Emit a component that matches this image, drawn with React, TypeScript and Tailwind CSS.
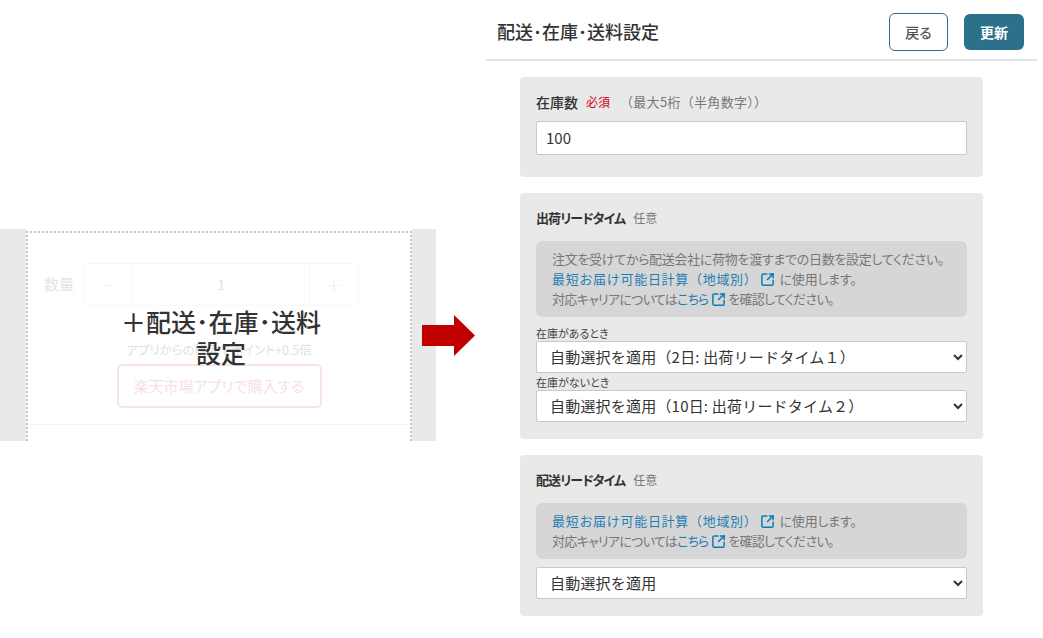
import { SquareArrowOutUpRight } from "lucide-react";

const Ext = ({ l, r }: { l: number; r: number }) => (
  <SquareArrowOutUpRight size={15} strokeWidth={2.4} style={{ marginLeft: l, marginRight: r }} className="inline-block -mt-[2px] text-[#0a7db8]" />
);

const selectCls =
  "block w-full h-[32px] bg-white border border-[#c9c9c9] rounded-[2px] pl-[9px] pb-[2px] text-[15px] text-[#333] tracking-[0.2px] [font-feature-settings:normal]";

const Short = () => (
  <div>
    <span className="[font-feature-settings:normal] text-[#1f7fb3] tracking-[0.7px]">最短お届け可能日計算（地域別）</span>
    <Ext l={2} r={5} />
    <span className="tracking-[-0.2px]">に使用します。</span>
  </div>
);
const Carrier = () => (
  <div className="tracking-[-0.7px]">
    対応キャリアについては<span className="text-[#1f7fb3] tracking-[-1px]">こちら</span>
    <Ext l={3} r={2} />を確認してください。
  </div>
);

export default function App() {
  return (
    <div className="flex w-[1043px] h-[638px] overflow-hidden bg-white text-[#333] font-['Noto_Sans_CJK_JP','Noto_Sans',sans-serif] [font-feature-settings:'palt']">
      <div className="w-[486px] shrink-0 pt-[229px]">
        <div className="flex items-center">
          <div className="relative w-[436px] h-[212px] shrink-0 bg-[#e9e9e9] pl-[26px] pr-[24px]">
            <div className="h-full bg-white pt-[2px]">
              <div className="h-full border-x-2 border-t-2 border-dotted border-[#c4c4c4]">
                <div className="opacity-20">
                  <div className="flex items-center pt-[30px] pl-[16px]">
                    <span className="w-[39px] text-[15px] text-[#777]">数量</span>
                    <div className="flex h-[43px] w-[276px] border border-[#ddd] rounded-[6px] text-[#bbb]">
                      <div className="w-[49px] border-r border-[#ddd] flex items-center justify-center text-[22px] font-light">−</div>
                      <div className="flex-1 flex items-center justify-center text-[13px] text-[#55f]">1</div>
                      <div className="w-[49px] border-l border-[#ddd] flex items-center justify-center text-[22px] font-light">+</div>
                    </div>
                  </div>
                  <div className="mt-[35px] text-center text-[12.5px] leading-[18px] text-[#666]">アプリからの購入でポイント+0.5倍</div>
                  <div className="mx-auto mt-[5px] w-[205px] h-[44px] border-2 border-[#d98080] rounded-[5px] flex items-center justify-center text-[15px] text-[#d96a6a]">
                    楽天市場アプリで購入する
                  </div>
                  <div className="mt-[16px] border-t border-[#ccc]" />
                </div>
              </div>
            </div>
            <div className="absolute left-[111px] top-[77px] w-[220px] text-center text-[25px] leading-[31px] font-medium text-[#333]">
              ＋配送･在庫･送料
              <br />
              設定
            </div>
          </div>
          <svg width="53" height="41" viewBox="0 0 53 41" className="-ml-[14px] relative shrink-0">
            <path d="M0 10H32V0L53 20.5L32 41V31H0Z" fill="#c00000" />
          </svg>
        </div>
      </div>

      <div className="w-[551px] shrink-0">
        <div className="h-[61px] border-b-2 border-[#e4e4ea] flex items-center pl-[11px] pr-[13px] pt-[5px]">
          <h1 className="text-[18px] leading-[24px] font-medium text-[#333] flex-1 -mt-[2px]">配送･在庫･送料設定</h1>
          <button className="w-[59px] h-[38px] border border-[#2c7189] rounded-[6px] text-[14px] font-medium text-[#555] mr-[16px]">戻る</button>
          <button className="w-[60px] h-[36px] bg-[#2c7189] rounded-[6px] text-[14px] font-bold text-white">更新</button>
        </div>

        <div className="pl-[34px] pr-[54px] pt-[16px] flex flex-col gap-[16px]">
          <section className="h-[100px] bg-[#e9e9e9] rounded-[4px] px-[16px] pt-[15px]">
            <div className="flex items-center h-[20px]">
              <span className="text-[14px] font-medium text-[#333]">在庫数</span>
              <span className="ml-[8px] text-[12px] text-[#d0021b]">必須</span>
              <span className="ml-[10px] text-[13px] text-[#777] [font-feature-settings:normal] tracking-[0.3px]">（最大5桁（半角数字））</span>
            </div>
            <input
              defaultValue="100"
              className="block mt-[9px] w-full h-[34px] bg-white border border-[#c9c9c9] rounded-[2px] px-[9px] pb-[2px] text-[15px] text-[#333]"
            />
          </section>

          <section className="h-[246px] bg-[#e9e9e9] rounded-[4px] px-[16px] pt-[15px]">
            <div className="flex items-center h-[20px]">
              <span className="text-[13px] font-bold text-[#333] tracking-[-0.9px]">出荷リードタイム</span>
              <span className="ml-[8px] text-[12px] text-[#777]">任意</span>
            </div>
            <div className="mt-[13px] bg-[#d6d6d6] rounded-[6px] px-[16px] py-[8px] text-[13px] leading-[20px] text-[#777] whitespace-nowrap">
              <div className="tracking-[-0.3px]">注文を受けてから配送会社に荷物を渡すまでの日数を設定してください。</div>
              <Short />
              <Carrier />
            </div>
            <div className="mt-[8px] text-[11px] leading-[16px] text-[#444]">在庫があるとき</div>
            <select className={selectCls}>
              <option>自動選択を適用（2日: 出荷リードタイム１）</option>
            </select>
            <div className="mt-[1px] text-[11px] leading-[16px] text-[#444]">在庫がないとき</div>
            <select className={selectCls}>
              <option>自動選択を適用（10日: 出荷リードタイム２）</option>
            </select>
          </section>

          <section className="h-[161px] bg-[#e9e9e9] rounded-[4px] px-[16px] pt-[15px]">
            <div className="flex items-center h-[20px]">
              <span className="text-[13px] font-bold text-[#333] tracking-[-0.9px]">配送リードタイム</span>
              <span className="ml-[8px] text-[12px] text-[#777]">任意</span>
            </div>
            <div className="mt-[13px] bg-[#d6d6d6] rounded-[6px] px-[16px] py-[8px] text-[13px] leading-[20px] text-[#777] whitespace-nowrap">
              <Short />
              <Carrier />
            </div>
            <select className={selectCls + " mt-[8px]"}>
              <option>自動選択を適用</option>
            </select>
          </section>
        </div>
      </div>
    </div>
  );
}
